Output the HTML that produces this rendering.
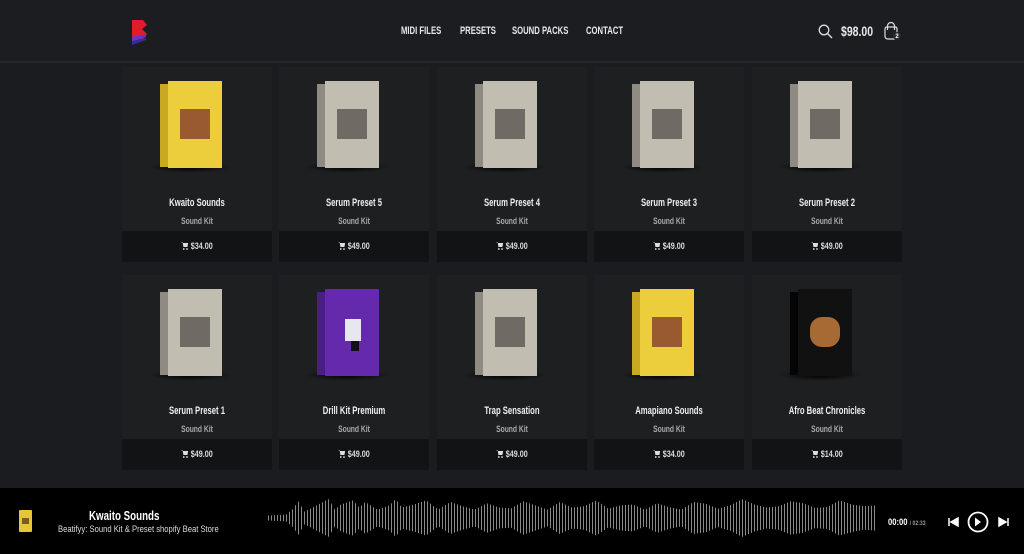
<!DOCTYPE html>
<html><head><meta charset="utf-8"><style>
*{margin:0;padding:0;box-sizing:border-box}
body{width:1024px;height:554px;overflow:hidden;background:#1b1c1f;font-family:"Liberation Sans",sans-serif;color:#eee;position:relative}
.hdr{position:absolute;left:0;top:0;width:1024px;height:63px;background:#1c1d21;border-bottom:2px solid #26272b}
.nav{position:absolute;top:25px;font-size:11px;font-weight:bold;color:#e8e8e8;transform:scaleX(.7);transform-origin:left;white-space:nowrap}
.card{position:absolute;width:150px;height:195px;background:#1e1f21}
.box{position:absolute;left:38px;top:14px;width:62px;height:87px}
.spine{position:absolute;left:0;top:3px;width:8px;height:83px}
.front{position:absolute;left:8px;top:0;width:54px;height:87px}
.shadow{position:absolute;left:-12px;top:80px;width:84px;height:12px;background:radial-gradient(ellipse,#000 0%,transparent 70%)}
.t{position:absolute;top:130px;width:150px;text-align:center;font-size:11px;font-weight:bold;color:#f0f0f0;transform:scaleX(.7)}
.s{position:absolute;top:149px;width:150px;text-align:center;font-size:9px;color:#aaa;font-weight:bold;transform:scaleX(.75)}
.p{position:absolute;top:164px;left:0;width:150px;height:31px;background:#121314}
.p div{text-align:center;line-height:31px;font-size:9px;font-weight:bold;color:#ddd;transform:scaleX(.8)}
.p svg{vertical-align:-1px;margin-right:3px}
.art{position:absolute;left:12px;top:28px;width:30px;height:30px}
.player{position:absolute;left:0;top:488px;width:1024px;height:66px;background:#000}
.wave{position:absolute;left:268px;top:497px;width:608px;height:42px;background:repeating-linear-gradient(90deg,#8a8a8a 0 1px,transparent 1px 3px);clip-path:polygon(0 44%,3% 42%,4% 30%,5% 10%,6% 35%,8% 20%,10% 5%,11% 30%,12% 18%,14% 8%,15% 25%,16% 12%,18% 30%,20% 20%,21% 5%,22% 25%,24% 18%,26% 8%,28% 30%,30% 12%,32% 22%,34% 30%,36% 15%,38% 25%,40% 27%,42% 10%,44% 20%,46% 30%,48% 12%,50% 25%,52% 22%,54% 8%,56% 28%,58% 20%,60% 18%,62% 30%,64% 15%,66% 24%,68% 30%,70% 12%,72% 16%,74% 28%,76% 20%,78% 5%,80% 18%,82% 25%,84% 22%,86% 10%,88% 15%,90% 26%,92% 24%,94% 8%,96% 18%,98% 22%,100% 20%,100% 80%,98% 78%,96% 84%,94% 92%,92% 76%,90% 74%,88% 85%,86% 90%,84% 78%,82% 75%,80% 82%,78% 95%,76% 80%,74% 72%,72% 84%,70% 88%,68% 70%,66% 76%,64% 85%,62% 70%,60% 82%,58% 80%,56% 72%,54% 92%,52% 78%,50% 75%,48% 88%,46% 70%,44% 80%,42% 90%,40% 73%,38% 75%,36% 85%,34% 70%,32% 78%,30% 88%,28% 70%,26% 92%,24% 82%,22% 75%,21% 95%,20% 80%,18% 70%,16% 88%,15% 75%,14% 92%,12% 82%,11% 70%,10% 95%,8% 80%,6% 65%,5% 90%,4% 70%,3% 58%,0 56%)}
</style></head><body>
<div class="hdr">
 <svg style="position:absolute;left:130px;top:18px" width="20" height="28" viewBox="0 0 20 28"><path d="M2 2h11l4 5-5 4 5 5-4 5H2z" fill="#e21b2b"/><path d="M2 19l14-3v3L2 24z" fill="#6a32c8"/><path d="M2 23l14-3v2L2 27z" fill="#3d2a9a"/></svg>
 <div class="nav" style="left:401px">MIDI FILES</div>
 <div class="nav" style="left:460px">PRESETS</div>
 <div class="nav" style="left:512px">SOUND PACKS</div>
 <div class="nav" style="left:586px">CONTACT</div>
 <svg style="position:absolute;left:818px;top:24px" width="15" height="15" viewBox="0 0 15 15"><circle cx="6" cy="6" r="4.8" fill="none" stroke="#ddd" stroke-width="1.3"/><path d="M9.5 9.5L14 14" stroke="#ddd" stroke-width="1.4"/></svg>
 <div class="nav" style="left:841px;top:23px;font-size:14px;transform:scaleX(.75)">$98.00</div>
 <svg style="position:absolute;left:882px;top:20px" width="22" height="22" viewBox="0 0 22 22"><path d="M3 9Q3 7 5 7h8q2 0 2 2v7q0 3-3 3H6q-3 0-3-3z" fill="none" stroke="#ddd" stroke-width="1.2"/><path d="M5.5 10V6a3.5 3.5 0 0 1 7 0v4" fill="none" stroke="#ddd" stroke-width="1.2"/><path d="M4 7h10" stroke="#ddd" stroke-width="1"/><circle cx="15" cy="16" r="4" fill="#2a2b30"/><text x="15" y="18" font-size="6" font-weight="bold" fill="#fff" text-anchor="middle" font-family="Liberation Sans">2</text></svg>
</div>

<!-- row 1 -->
<div class="card" style="left:122px;top:67px"><div class="box"><div class="shadow"></div><div class="spine" style="background:#c9a822"></div><div class="front" style="background:#eccd3c"><div class="art" style="background:#9a5a30"></div></div></div><div class="t">Kwaito Sounds</div><div class="s">Sound Kit</div><div class="p"><div><svg width="9" height="8" viewBox="0 0 9 8"><path d="M0 0h2l1 5h5l1-4H2.5" fill="#ddd"/><circle cx="3.5" cy="7" r="1" fill="#ddd"/><circle cx="7.5" cy="7" r="1" fill="#ddd"/></svg>$34.00</div></div></div>
<div class="card" style="left:279px;top:67px"><div class="box"><div class="shadow"></div><div class="spine" style="background:#8f8b82"></div><div class="front" style="background:#c2bdb1"><div class="art" style="background:#6f6b64"></div></div></div><div class="t">Serum Preset 5</div><div class="s">Sound Kit</div><div class="p"><div><svg width="9" height="8" viewBox="0 0 9 8"><path d="M0 0h2l1 5h5l1-4H2.5" fill="#ddd"/><circle cx="3.5" cy="7" r="1" fill="#ddd"/><circle cx="7.5" cy="7" r="1" fill="#ddd"/></svg>$49.00</div></div></div>
<div class="card" style="left:437px;top:67px"><div class="box"><div class="shadow"></div><div class="spine" style="background:#8f8b82"></div><div class="front" style="background:#c2bdb1"><div class="art" style="background:#6f6b64"></div></div></div><div class="t">Serum Preset 4</div><div class="s">Sound Kit</div><div class="p"><div><svg width="9" height="8" viewBox="0 0 9 8"><path d="M0 0h2l1 5h5l1-4H2.5" fill="#ddd"/><circle cx="3.5" cy="7" r="1" fill="#ddd"/><circle cx="7.5" cy="7" r="1" fill="#ddd"/></svg>$49.00</div></div></div>
<div class="card" style="left:594px;top:67px"><div class="box"><div class="shadow"></div><div class="spine" style="background:#8f8b82"></div><div class="front" style="background:#c2bdb1"><div class="art" style="background:#6f6b64"></div></div></div><div class="t">Serum Preset 3</div><div class="s">Sound Kit</div><div class="p"><div><svg width="9" height="8" viewBox="0 0 9 8"><path d="M0 0h2l1 5h5l1-4H2.5" fill="#ddd"/><circle cx="3.5" cy="7" r="1" fill="#ddd"/><circle cx="7.5" cy="7" r="1" fill="#ddd"/></svg>$49.00</div></div></div>
<div class="card" style="left:752px;top:67px"><div class="box"><div class="shadow"></div><div class="spine" style="background:#8f8b82"></div><div class="front" style="background:#c2bdb1"><div class="art" style="background:#6f6b64"></div></div></div><div class="t">Serum Preset 2</div><div class="s">Sound Kit</div><div class="p"><div><svg width="9" height="8" viewBox="0 0 9 8"><path d="M0 0h2l1 5h5l1-4H2.5" fill="#ddd"/><circle cx="3.5" cy="7" r="1" fill="#ddd"/><circle cx="7.5" cy="7" r="1" fill="#ddd"/></svg>$49.00</div></div></div>

<!-- row 2 -->
<div class="card" style="left:122px;top:275px"><div class="box"><div class="shadow"></div><div class="spine" style="background:#8f8b82"></div><div class="front" style="background:#c2bdb1"><div class="art" style="background:#6f6b64"></div></div></div><div class="t">Serum Preset 1</div><div class="s">Sound Kit</div><div class="p"><div><svg width="9" height="8" viewBox="0 0 9 8"><path d="M0 0h2l1 5h5l1-4H2.5" fill="#ddd"/><circle cx="3.5" cy="7" r="1" fill="#ddd"/><circle cx="7.5" cy="7" r="1" fill="#ddd"/></svg>$49.00</div></div></div>
<div class="card" style="left:279px;top:275px"><div class="box"><div class="shadow"></div><div class="spine" style="background:#4a1e85"></div><div class="front" style="background:#6429ad"><div class="art" style="background:#e8e6ee;width:16px;height:22px;left:20px;top:30px"></div><div style="position:absolute;left:26px;top:52px;width:8px;height:10px;background:#111"></div></div></div><div class="t">Drill Kit Premium</div><div class="s">Sound Kit</div><div class="p"><div><svg width="9" height="8" viewBox="0 0 9 8"><path d="M0 0h2l1 5h5l1-4H2.5" fill="#ddd"/><circle cx="3.5" cy="7" r="1" fill="#ddd"/><circle cx="7.5" cy="7" r="1" fill="#ddd"/></svg>$49.00</div></div></div>
<div class="card" style="left:437px;top:275px"><div class="box"><div class="shadow"></div><div class="spine" style="background:#8f8b82"></div><div class="front" style="background:#c2bdb1"><div class="art" style="background:#6f6b64"></div></div></div><div class="t">Trap Sensation</div><div class="s">Sound Kit</div><div class="p"><div><svg width="9" height="8" viewBox="0 0 9 8"><path d="M0 0h2l1 5h5l1-4H2.5" fill="#ddd"/><circle cx="3.5" cy="7" r="1" fill="#ddd"/><circle cx="7.5" cy="7" r="1" fill="#ddd"/></svg>$49.00</div></div></div>
<div class="card" style="left:594px;top:275px"><div class="box"><div class="shadow"></div><div class="spine" style="background:#c9a822"></div><div class="front" style="background:#eccd3c"><div class="art" style="background:#9a5a30"></div></div></div><div class="t">Amapiano Sounds</div><div class="s">Sound Kit</div><div class="p"><div><svg width="9" height="8" viewBox="0 0 9 8"><path d="M0 0h2l1 5h5l1-4H2.5" fill="#ddd"/><circle cx="3.5" cy="7" r="1" fill="#ddd"/><circle cx="7.5" cy="7" r="1" fill="#ddd"/></svg>$34.00</div></div></div>
<div class="card" style="left:752px;top:275px"><div class="box"><div class="shadow"></div><div class="spine" style="background:#050505"></div><div class="front" style="background:#111"><div class="art" style="background:#a86a35;border-radius:40%"></div></div></div><div class="t">Afro Beat Chronicles</div><div class="s">Sound Kit</div><div class="p"><div><svg width="9" height="8" viewBox="0 0 9 8"><path d="M0 0h2l1 5h5l1-4H2.5" fill="#ddd"/><circle cx="3.5" cy="7" r="1" fill="#ddd"/><circle cx="7.5" cy="7" r="1" fill="#ddd"/></svg>$14.00</div></div></div>

<div class="player">
 <div style="position:absolute;left:19px;top:22px;width:13px;height:22px;background:#e8c436;border-radius:1px"><div style="position:absolute;left:3px;top:8px;width:7px;height:6px;background:#7a5a2a"></div></div>
 <div style="position:absolute;left:89px;top:20px;font-size:13px;font-weight:bold;color:#fff;transform:scaleX(.75);transform-origin:left;white-space:nowrap">Kwaito Sounds</div>
 <div style="position:absolute;left:58px;top:36px;font-size:9px;color:#ddd;transform:scaleX(.85);transform-origin:left;white-space:nowrap">Beatifyy: Sound Kit &amp; Preset shopify Beat Store</div>
 <div style="position:absolute;left:888px;top:29px;font-size:9px;font-weight:bold;color:#fff;transform:scaleX(.85);transform-origin:left;white-space:nowrap">00:00 <span style="font-size:6px;color:#999">/ 02:33</span></div>
 <svg style="position:absolute;left:946px;top:22px" width="68" height="24" viewBox="0 0 68 24"><path d="M3 8v8M12 8l-7 4 7 4z" stroke="#fff" stroke-width="1.5" fill="#fff"/><circle cx="32" cy="12" r="9.5" fill="none" stroke="#fff" stroke-width="1.8"/><path d="M29 7.5l6 4.5-6 4.5z" fill="#fff"/><path d="M53 8l7 4-7 4z M62 8v8" stroke="#fff" stroke-width="1.5" fill="#fff"/></svg>
</div>
<div class="wave"></div>
</body></html>
